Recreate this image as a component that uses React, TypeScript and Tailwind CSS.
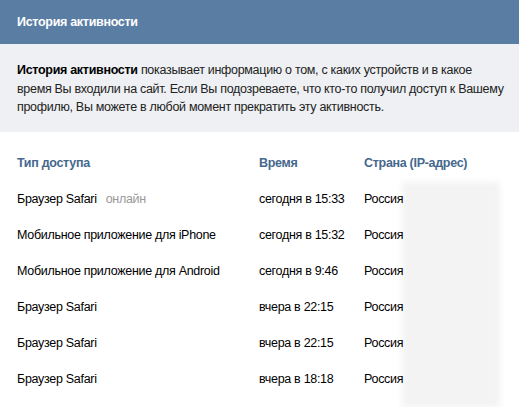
import React from "react";

type Session = { type: string; online?: boolean; time: string; country: string };

const sessions: Session[] = [
  { type: "Браузер Safari", online: true, time: "сегодня в 15:33", country: "Россия" },
  { type: "Мобильное приложение для iPhone", time: "сегодня в 15:32", country: "Россия" },
  { type: "Мобильное приложение для Android", time: "сегодня в 9:46", country: "Россия" },
  { type: "Браузер Safari", time: "вчера в 22:15", country: "Россия" },
  { type: "Браузер Safari", time: "вчера в 22:15", country: "Россия" },
  { type: "Браузер Safari", time: "вчера в 18:18", country: "Россия" },
];

export default function App() {
  return (
    <div className="w-[519px] h-[407px] overflow-hidden bg-white text-[12.5px] tracking-[-0.3px] text-black font-['Liberation_Sans',Arial,sans-serif]">
      <div className="h-[44px] bg-[#5a7da4] px-[17px] flex items-center">
        <span className="text-white font-bold">История активности</span>
      </div>

      <div className="h-[88px] bg-[#eef0f3] px-[17px] pt-[17px] leading-[18.5px] text-[#222] whitespace-nowrap">
        <b className="text-black">История активности</b> показывает информацию о том, с каких устройств и в какое
        <br />
        время Вы входили на сайт. Если Вы подозреваете, что кто-то получил доступ к Вашему
        <br />
        профилю, Вы можете в любой момент прекратить эту активность.
      </div>

      <div className="relative px-[17px]">
        {/* blurred IP column */}
        <div className="absolute left-[402px] top-[50px] w-[98px] h-[225px] bg-[#f3f3f4] blur-[3px]" />

        <div className="relative grid grid-cols-[242px_105px_1fr] pt-[14px] h-[49px] items-center font-bold text-[#45688e]">
          <span>Тип доступа</span>
          <span>Время</span>
          <span>Страна (IP-адрес)</span>
        </div>

        {sessions.map((s, i) => (
          <div key={i} className="relative grid grid-cols-[242px_105px_1fr] h-[36px] items-center">
            <span>
              {s.type}
              {s.online && <span className="ml-[9px] text-[#999]">онлайн</span>}
            </span>
            <span>{s.time}</span>
            <span>{s.country}</span>
          </div>
        ))}
      </div>
    </div>
  );
}
